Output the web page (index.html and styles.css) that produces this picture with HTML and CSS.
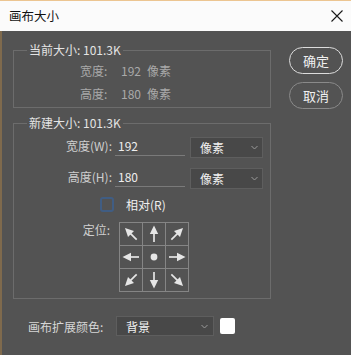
FILE: index.html
```html
<!DOCTYPE html>
<html lang="zh">
<head>
<meta charset="utf-8">
<title>画布大小</title>
<link rel="stylesheet" href="styles.css">
</head>
<body>
<div class="dialog">
  <div class="titlebar">
    <span class="title">画布大小</span>
    <svg class="close" width="12" height="12" viewBox="0 0 12 12"><path d="M0.5 0.5 L11.5 11.5 M11.5 0.5 L0.5 11.5" stroke="#1a1a1a" stroke-width="1.1" fill="none"/></svg>
  </div>
  <div class="main">
    <div class="left">
      <fieldset class="group g1">
        <legend>当前大小: 101.3K</legend>
        <div class="infos">
          <div class="info"><span class="ilabel">宽度:</span><span class="ival">192</span><span class="iunit">像素</span></div>
          <div class="info"><span class="ilabel">高度:</span><span class="ival">180</span><span class="iunit">像素</span></div>
        </div>
      </fieldset>
      <fieldset class="group g2">
        <legend>新建大小: 101.3K</legend>
        <div class="field">
          <span class="flabel">宽度(W):</span>
          <span class="input">192</span>
          <span class="select unit"><span>像素</span><svg class="chev" width="7" height="5" viewBox="0 0 7 5"><path d="M0.5 1 L3.5 4 L6.5 1" stroke="#9a9a9a" fill="none"/></svg></span>
        </div>
        <div class="field f2">
          <span class="flabel">高度(H):</span>
          <span class="input">180</span>
          <span class="select unit"><span>像素</span><svg class="chev" width="7" height="5" viewBox="0 0 7 5"><path d="M0.5 1 L3.5 4 L6.5 1" stroke="#9a9a9a" fill="none"/></svg></span>
        </div>
        <div class="check"><span class="box"></span><span>相对(R)</span></div>
        <div class="anchor">
          <span class="alabel">定位:</span>
          <div class="grid">
            <span class="cell"><svg viewBox="0 0 22 22"><g transform="rotate(-45 11 11)"><path d="M11 19 V10" stroke="#e6e6e6" stroke-width="1.7"/><path d="M11 2.5 L6.8 11 H15.2 Z" fill="#e6e6e6"/></g></svg></span>
            <span class="cell"><svg viewBox="0 0 22 22"><g><path d="M11 19 V10" stroke="#e6e6e6" stroke-width="1.7"/><path d="M11 2.5 L6.8 11 H15.2 Z" fill="#e6e6e6"/></g></svg></span>
            <span class="cell"><svg viewBox="0 0 22 22"><g transform="rotate(45 11 11)"><path d="M11 19 V10" stroke="#e6e6e6" stroke-width="1.7"/><path d="M11 2.5 L6.8 11 H15.2 Z" fill="#e6e6e6"/></g></svg></span>
            <span class="cell"><svg viewBox="0 0 22 22"><g transform="rotate(-90 11 11)"><path d="M11 19 V10" stroke="#e6e6e6" stroke-width="1.7"/><path d="M11 2.5 L6.8 11 H15.2 Z" fill="#e6e6e6"/></g></svg></span>
            <span class="cell"><svg viewBox="0 0 22 22"><circle cx="11" cy="11" r="3.4" fill="#e6e6e6"/></svg></span>
            <span class="cell"><svg viewBox="0 0 22 22"><g transform="rotate(90 11 11)"><path d="M11 19 V10" stroke="#e6e6e6" stroke-width="1.7"/><path d="M11 2.5 L6.8 11 H15.2 Z" fill="#e6e6e6"/></g></svg></span>
            <span class="cell"><svg viewBox="0 0 22 22"><g transform="rotate(-135 11 11)"><path d="M11 19 V10" stroke="#e6e6e6" stroke-width="1.7"/><path d="M11 2.5 L6.8 11 H15.2 Z" fill="#e6e6e6"/></g></svg></span>
            <span class="cell"><svg viewBox="0 0 22 22"><g transform="rotate(180 11 11)"><path d="M11 19 V10" stroke="#e6e6e6" stroke-width="1.7"/><path d="M11 2.5 L6.8 11 H15.2 Z" fill="#e6e6e6"/></g></svg></span>
            <span class="cell"><svg viewBox="0 0 22 22"><g transform="rotate(135 11 11)"><path d="M11 19 V10" stroke="#e6e6e6" stroke-width="1.7"/><path d="M11 2.5 L6.8 11 H15.2 Z" fill="#e6e6e6"/></g></svg></span>
          </div>
        </div>
      </fieldset>
      <div class="extend">
        <span class="elabel">画布扩展颜色:</span>
        <span class="select bgsel"><span>背景</span><svg class="chev" width="7" height="5" viewBox="0 0 7 5"><path d="M0.5 1 L3.5 4 L6.5 1" stroke="#9a9a9a" fill="none"/></svg></span>
        <span class="swatch"></span>
      </div>
    </div>
    <div class="buttons">
      <button class="btn primary">确定</button>
      <button class="btn">取消</button>
    </div>
  </div>
</div>
</body>
</html>
```
FILE: styles.css
```css
html, body {
  margin: 0;
  padding: 0;
}
body {
  width: 351px;
  height: 355px;
  overflow: hidden;
  background: #535353;
  font-family: "Noto Sans CJK SC", "Noto Sans", sans-serif;
  font-size: 12px;
}
.dialog {
  width: 351px;
  height: 355px;
  display: flex;
  flex-direction: column;
}
.titlebar {
  height: 30px;
  flex: none;
  border-top: 1px solid #ecc591;
  background: #fbfbfb;
  display: flex;
  align-items: center;
  justify-content: space-between;
  padding: 0 8px 0 9px;
}
.title {
  color: #111;
  font-size: 12.5px;
  line-height: 14px;
}
.close {
  display: block;
}
.main {
  flex: 1;
  display: flex;
  border-left: 2px solid #7f6a4d;
  padding: 12px 0 0 11px;
}
.left {
  width: 258px;
  display: flex;
  flex-direction: column;
}
.group {
  margin: 0;
  border: 1px solid #6c6c6c;
  padding: 0;
  min-width: 0;
}
.group legend {
  margin-left: 13px;
  padding: 0 2px;
  line-height: 14px;
  height: 14px;
  color: #e4e4e4;
}
.g1 {
  padding: 4px 0 3px 0;
}
.infos {
  padding-left: 66px;
  display: flex;
  flex-direction: column;
  gap: 3px;
}
.info {
  height: 20px;
  line-height: 20px;
  color: #a9a9a9;
  display: flex;
}
.ilabel {
  width: 41px;
}
.iunit {
  margin-left: 6px;
}
.g2 {
  margin-top: 8px;
  padding: 7px 0 6px 0;
}
.field {
  height: 21px;
  display: flex;
  align-items: flex-start;
}
.f2 {
  margin-top: 10px;
}
.flabel {
  width: 98px;
  text-align: right;
  line-height: 18px;
  height: 18px;
  color: #cfcfcf;
}
.input {
  margin-left: 3px;
  width: 67px;
  padding-left: 3px;
  height: 18px;
  line-height: 18px;
  border-bottom: 1px solid #7a7a7a;
  color: #eeeeee;
}
.select {
  box-sizing: border-box;
  background: #484848;
  border: 1px solid #5e5e5e;
  color: #f2f2f2;
  display: flex;
  align-items: center;
  justify-content: space-between;
}
.unit {
  margin-left: 5px;
  width: 73px;
  height: 21px;
  padding: 0 4px 0 9px;
}
.chev {
  display: block;
}
.check {
  margin-top: 7px;
  height: 16px;
  display: flex;
  align-items: center;
  padding-left: 86px;
  color: #f0f0f0;
}
.box {
  width: 10px;
  height: 11px;
  border: 2px solid #3d5f8c;
  border-radius: 3px;
  margin-right: 12px;
  opacity: 0.85;
}
.anchor {
  margin-top: 10px;
  display: flex;
  align-items: flex-start;
}
.alabel {
  width: 96px;
  text-align: right;
  margin-right: 9px;
  line-height: 16px;
  color: #cfcfcf;
}
.grid {
  display: grid;
  grid-template-columns: repeat(3, 22px);
  grid-template-rows: repeat(3, 22px);
  gap: 1px;
  background: #858585;
  border: 1px solid #858585;
}
.cell {
  background: #535353;
  display: block;
}
.cell svg {
  display: block;
  width: 22px;
  height: 22px;
}
.extend {
  margin-top: 17px;
  padding-left: 15px;
  display: flex;
  align-items: center;
}
.elabel {
  width: 82px;
  color: #d6d6d6;
  line-height: 19px;
}
.bgsel {
  margin-left: 6px;
  width: 98px;
  height: 20px;
  padding: 0 5px 0 9px;
}
.swatch {
  margin-left: 6px;
  width: 15px;
  height: 16px;
  background: #ffffff;
  border-radius: 2px;
}
.buttons {
  margin-left: 18px;
  display: flex;
  flex-direction: column;
  gap: 8px;
  padding-top: 4px;
}
.btn {
  box-sizing: border-box;
  width: 54px;
  height: 27px;
  border-radius: 14px;
  background: #535353;
  border: 1px solid #8a8a8a;
  color: #f0f0f0;
  font-family: inherit;
  font-size: 13px;
  padding: 0;
  line-height: 24px;
}
.primary {
  border: 1.5px solid #dcdcdc;
}
```
